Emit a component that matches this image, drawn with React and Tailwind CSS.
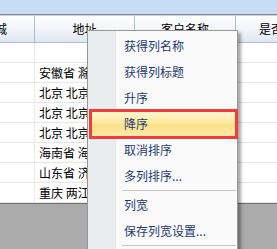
const rows = [
  "",
  "安徽省 滁州市",
  "北京 北京市",
  "北京 北京市",
  "北京 北京市",
  "海南省 海口市",
  "山东省 济南市",
  "重庆 两江新区",
];

const items = [
  { label: "获得列名称" },
  { label: "获得列标题" },
  { label: "升序" },
  { label: "降序", active: true },
  { label: "取消排序" },
  { label: "多列排序..." },
  { sep: true },
  { label: "列宽" },
  { label: "保存列宽设置..." },
  { sep: true },
];

function ContextMenu() {
  return (
    <div className="absolute left-[87px] top-[30px] w-[151px] h-[230px] border border-[#979797] px-[1px] pt-[2px] shadow-[3px_3px_3px_rgba(0,0,0,0.35)] bg-[linear-gradient(to_right,#e9eded_27px,#dfe1e1_27px,#dfe1e1_28px,#ffffff_28px,#ffffff_29px,#fafafa_29px)]">
      {items.map((item, i) =>
        item.sep ? (
          <div key={i} className="h-[3px] pl-[33px] pt-[1px]">
            <div className="h-[1px] bg-[#c5c5c5]" />
          </div>
        ) : item.active ? (
          <div
            key={i}
            className="h-[30px] -my-[2px] -mr-[2px] flex items-center pl-[32px] border-[3px] border-[#f43b3b] bg-[linear-gradient(to_bottom,#fff6d0,#fde89c_45%,#fbe08a_55%,#fdeaa8)] text-[#1d3a73]"
          >
            {item.label}
          </div>
        ) : (
          <div key={i} className="h-[26px] flex items-center pl-[35px] text-[#1d3a73]">
            {item.label}
          </div>
        )
      )}
    </div>
  );
}

export default function App() {
  return (
    <div className="relative w-[277px] h-[249px] overflow-hidden bg-white text-[12px] leading-none text-black font-['Noto_Sans_CJK_SC','Noto_Sans',sans-serif] flex flex-col">
      <div className="h-[14px] shrink-0 bg-[#c6ddf7]" />
      <div className="h-[1px] shrink-0 bg-[#8a8a8a]" />
      <div className="h-[1px] shrink-0 bg-[#cfd3d8]" />

      <div className="h-[27px] shrink-0 flex border-b border-[#a9bdd6] bg-[linear-gradient(to_bottom,#fdfeff,#f2f5f9_50%,#dfe7f1)] overflow-hidden">
        <div className="w-[35px] shrink-0 border-r border-[#a9bdd6] flex items-center overflow-hidden">
          <span className="-ml-[5px]">城</span>
        </div>
        <div className="w-[100px] shrink-0 border-r border-[#a9bdd6] flex items-center justify-center">
          地址
        </div>
        <div className="w-[101px] shrink-0 border-r border-[#a9bdd6] flex items-center justify-center">
          客户名称
        </div>
        <div className="flex-1 flex items-center pl-[23px] whitespace-nowrap overflow-hidden">
          是否
        </div>
      </div>

      {rows.map((r, i) => (
        <div key={i} className="h-[20px] shrink-0 flex border-b border-[#e6e6e6]">
          <div className="w-[35px] shrink-0 border-r border-[#ececec]" />
          <div className="w-[100px] shrink-0 border-r border-[#ececec] flex items-center pl-[4px] whitespace-nowrap overflow-hidden">
            {r}
          </div>
          <div className="w-[101px] shrink-0 border-r border-[#ececec]" />
          <div className="flex-1" />
        </div>
      ))}

      <div className="flex-1 bg-[#ababab] border-t border-[#6f6f6f]" />

      <ContextMenu />
    </div>
  );
}
